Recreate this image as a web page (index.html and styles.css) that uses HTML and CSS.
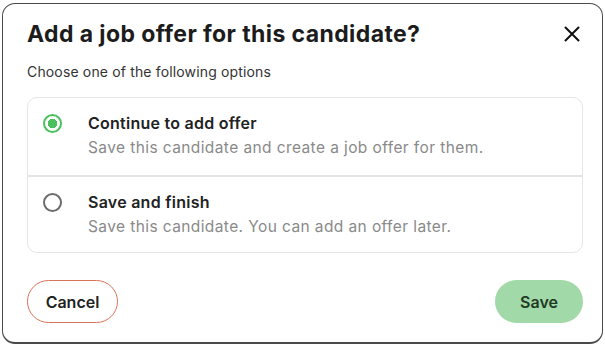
FILE: index.html
```html
<!DOCTYPE html>
<html lang="en">
<head>
    <meta charset="UTF-8">
    <title>Add job offer</title>
    <link rel="stylesheet" href="styles.css">
</head>
<body>

<div class="modal">
    <div class="modal-header">
        <h2 class="modal-title">Add a job offer for this candidate?</h2>
        <button class="close-btn" aria-label="Close">
            <svg width="16" height="16" viewBox="0 0 16 16">
                <path d="M1.5 1.5 L14.5 14.5 M14.5 1.5 L1.5 14.5" stroke="#111" stroke-width="2" stroke-linecap="round"/>
            </svg>
        </button>
    </div>
    <p class="modal-sub">Choose one of the following options</p>

    <!-- Options -->
    <div class="options">
        <label class="option">
            <span class="radio checked"></span>
            <span class="option-text">
                <span class="option-title">Continue to add offer</span>
                <span class="option-desc">Save this candidate and create a job offer for them.</span>
            </span>
        </label>
        <label class="option">
            <span class="radio"></span>
            <span class="option-text">
                <span class="option-title">Save and finish</span>
                <span class="option-desc">Save this candidate. You can add an offer later.</span>
            </span>
        </label>
    </div>

    <div class="modal-footer">
        <button class="btn btn-cancel">Cancel</button>
        <button class="btn btn-save">Save</button>
    </div>
</div>

</body>
</html>
```

FILE: styles.css
```css
body {
    margin: 0;
    background: #fff;
    font-family: "Inter", "Open Sans", sans-serif;
    color: #1c1c1c;
}
.modal {
    box-sizing: border-box;
    width: 601px;
    height: 341px;
    margin: 3px 0 0 2px;
    padding: 0 20px 0 24px;
    border: 1px solid #4a4a4a;
    border-bottom-width: 2px;
    border-radius: 13px;
    background: #fff;
}
.modal-header {
    display: flex;
    align-items: center;
    justify-content: space-between;
    height: 59px;
}
.modal-title {
    margin: 0;
    font-size: 23px;
    font-weight: 700;
    letter-spacing: 0.4px;
}
.close-btn {
    border: none;
    background: none;
    padding: 0;
    margin-right: 2px;
    display: flex;
}
.modal-sub {
    margin: 0 0 17px;
    font-size: 14px;
    letter-spacing: 0.15px;
    color: #333;
}
.options {
    border: 1px solid #e6e6e6;
    border-radius: 10px;
    margin-right: -1px;
}
.option {
    display: flex;
    align-items: flex-start;
    height: 77px;
    box-sizing: border-box;
    padding: 16px 0 0 15px;
}
.option + .option {
    border-top: 2px solid #e4e4e4;
}
.radio {
    box-sizing: border-box;
    width: 19px;
    height: 19px;
    border: 2px solid #6c6c6c;
    border-radius: 50%;
    flex-shrink: 0;
}
.radio.checked {
    border-color: #4cc05e;
    background: radial-gradient(circle, #4cc05e 0 4.5px, #fff 5px);
}
.option-text {
    display: flex;
    flex-direction: column;
    margin-left: 26px;
}
.option-title {
    font-size: 16px;
    font-weight: 600;
    letter-spacing: 0.25px;
    color: #222;
    line-height: 19px;
}
.option-desc {
    margin-top: 5px;
    font-size: 15.5px;
    letter-spacing: 0.4px;
    color: #8a8a8a;
    line-height: 19px;
}
.modal-footer {
    display: flex;
    justify-content: space-between;
    margin-top: 27px;
    margin-right: -1px;
}
.btn {
    height: 43px;
    border-radius: 22px;
    font-family: inherit;
    font-size: 16px;
    font-weight: 600;
    cursor: pointer;
}
.btn-cancel {
    width: 91px;
    border: 1.5px solid #d97557;
    background: #fff;
    color: #222;
}
.btn-save {
    width: 88px;
    border: none;
    background: #a2d9a8;
    color: #1f3a24;
}
```
